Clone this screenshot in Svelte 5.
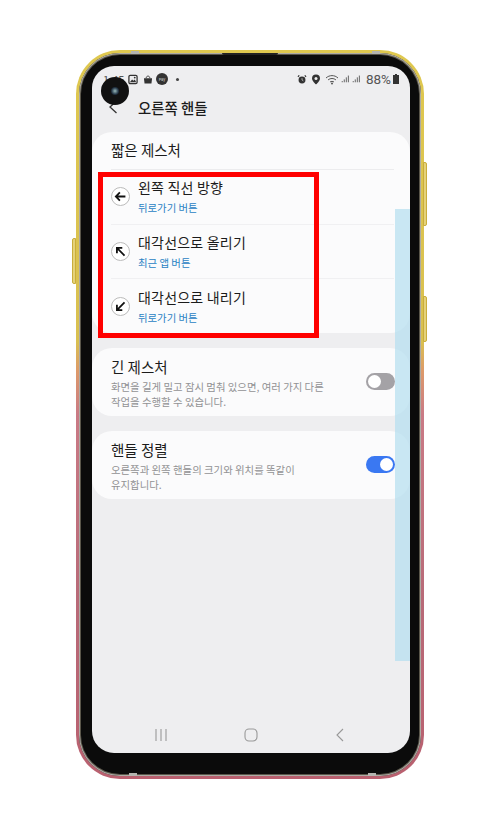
<script>
  const rows = [
    { title: '왼쪽 직선 방향', sub: '뒤로가기 버튼', d: 'M15 9.5H4.5M8.8 5L4.3 9.5L8.8 14' },
    { title: '대각선으로 올리기', sub: '최근 앱 버튼', d: 'M14 14L5.5 5.5M5.5 11.5V5.5H11.5' },
    { title: '대각선으로 내리기', sub: '뒤로가기 버튼', d: 'M14 5L5.5 13.5M5.5 7.5V13.5H11.5' }
  ];
</script>

<div class="page">
  <div class="phone">
    <div class="bezel">
      <div class="screen">
        <div class="status">
          <div class="status-left">
            <span class="time">1:45</span>
            <svg width="10" height="11" viewBox="0 0 11 11"><rect x="1" y="1" width="9" height="9" rx="1.5" fill="none" stroke="#333" stroke-width="1.4"/><path d="M2 8.5L4.5 5.5L6 7L7.5 5.5L9 8.5Z" fill="#333"/><circle cx="7.4" cy="3.4" r="1" fill="#333"/></svg>
            <svg width="10" height="11" viewBox="0 0 11 11" class="bag"><path d="M1 4H10L9.3 10H1.7Z" fill="#333"/><path d="M3.5 4C3.5 1 7.5 1 7.5 4" fill="none" stroke="#333" stroke-width="1"/></svg>
            <span class="pay">Pay</span>
            <span class="dot"></span>
          </div>
          <div class="status-right">
            <svg width="10" height="11" viewBox="0 0 11 11"><circle cx="5.5" cy="6" r="3.8" fill="#333"/><path d="M1 2.5L2.5 1M10 2.5L8.5 1" stroke="#333" stroke-width="1.3"/><path d="M5.5 4V6L7 7" stroke="#eee" stroke-width=".7" fill="none"/></svg>
            <svg width="10" height="11" viewBox="0 0 10 11" class="pin"><path d="M5 .5A4 4 0 0 1 9 4.5C9 7 5 10.500 5 10.500S1 7 1 4.5A4 4 0 0 1 5 .5Z" fill="#333"/><circle cx="5" cy="4.5" r="1.500" fill="#eee"/></svg>
            <svg width="14" height="11" viewBox="0 0 14 11" class="wifi"><path d="M1 4C4.500 .8 9.500 .8 13 4M3 6C5.300 4 8.700 4 11 6M5 8C6 7.200 8 7.200 9 8" fill="none" stroke="#555" stroke-width="1"/><circle cx="7" cy="9.500" r="1" fill="#555"/></svg>
            <svg width="9" height="10" viewBox="0 0 11 10"><path d="M1.500 9V7.500M4 9V5.500M6.500 9V3M9 9V.8" stroke="#555" stroke-width="1.100"/></svg>
            <svg width="9" height="10" viewBox="0 0 11 10"><path d="M1.500 9V7.500M4 9V5.500M6.500 9V3M9 9V.8" stroke="#555" stroke-width="1.100"/></svg>
            <span class="battery-text">88%</span>
            <svg width="6" height="10" viewBox="0 0 6 10"><path d="M2 0H4V1H6V10H0V1H2Z" fill="#333"/></svg>
          </div>
        </div>

        <div class="header">
          <svg width="12" height="16" viewBox="0 0 12 16"><path d="M9.500 2L3 8L9.500 14" fill="none" stroke="#333" stroke-width="1.300"/></svg>
          <h1>오른쪽 핸들</h1>
        </div>

        <section class="card first">
          <h2>짧은 제스처</h2>
          {#each rows as row}
            <div class="row">
              <span class="icon">
                <svg width="19" height="19" viewBox="0 0 19 19"><path d={row.d} fill="none" stroke="#111" stroke-width="2"/></svg>
              </span>
              <div class="row-text">
                <div class="row-title">{row.title}</div>
                <div class="row-sub">{row.sub}</div>
              </div>
            </div>
          {/each}
        </section>

        <section class="card setting">
          <div class="setting-text">
            <h3>긴 제스처</h3>
            <p>화면을 길게 밀고 잠시 멈춰 있으면, 여러 가지 다른<br />작업을 수행할 수 있습니다.</p>
          </div>
          <span class="toggle"><span class="knob"></span></span>
        </section>

        <section class="card setting">
          <div class="setting-text">
            <h3>핸들 정렬</h3>
            <p>오른쪽과 왼쪽 핸들의 크기와 위치를 똑같이<br />유지합니다.</p>
          </div>
          <span class="toggle on"><span class="knob"></span></span>
        </section>

        <div class="spacer"></div>

        <nav class="navbar">
          <svg width="14" height="14" viewBox="0 0 14 14"><path d="M2 1V13M7 1V13M12 1V13" stroke="#999" stroke-width="1.100"/></svg>
          <svg width="14" height="14" viewBox="0 0 14 14"><rect x="1" y="1" width="12" height="12" rx="4" fill="none" stroke="#999" stroke-width="1.100"/></svg>
          <svg width="14" height="14" viewBox="0 0 14 14"><path d="M10 1L4 7L10 13" fill="none" stroke="#999" stroke-width="1.100"/></svg>
        </nav>
      </div>
    </div>

    <span class="btn btn-left"></span>
    <span class="btn btn-right-a"></span>
    <span class="btn btn-right-b"></span>
    <span class="band top-a"></span>
    <span class="band top-b"></span>
    <span class="band bottom-a"></span>
    <span class="band bottom-b"></span>
    <span class="earpiece"></span>
    <span class="camera"><span class="lens"></span></span>
    <span class="strip"></span>
    <span class="highlight"></span>
  </div>
</div>

<style>
  :global(body) {
    margin: 0;
    background: #fff;
  }
  .page {
    width: 500px;
    height: 827px;
    padding: 50px 76px 0;
    box-sizing: border-box;
    font-family: "Noto Sans CJK KR", "Noto Sans", sans-serif;
    overflow: hidden;
  }
  .phone {
    position: relative;
    width: 348px;
    height: 729px;
  }
  .bezel {
    box-sizing: border-box;
    height: 100%;
    padding: 16px 11px 23px 16px;
    border-radius: 44px;
    border: 3px solid transparent;
    background:
      linear-gradient(#0b0b0b, #0b0b0b) padding-box,
      linear-gradient(#dfc84f 0%, #d9c050 40%, #dd9a6a 44%, #c97a85 50%, #b86a78 75%, #b9606f 100%) border-box;
    box-shadow:
      inset 0 0 0 1px rgba(255, 255, 255, 0.5),
      inset 0 0 0 2px rgba(110, 105, 90, 0.8);
    display: flex;
  }
  .screen {
    flex: 1;
    margin: -3px 0 0 -3px;
    background: #eeeef0;
    border-radius: 22px;
    overflow: hidden;
    display: flex;
    flex-direction: column;
    color: #1b1b1b;
  }
  .status {
    height: 26px;
    flex: none;
    padding: 0 11px;
    display: flex;
    align-items: center;
    justify-content: space-between;
    font-size: 12px;
    color: #555;
  }
  .status-left,
  .status-right {
    display: flex;
    align-items: center;
    gap: 3px;
  }
  .status-right {
    gap: 2px;
  }
  .bag,
  .pin,
  .wifi {
    margin-left: 2px;
  }
  .time {
    font-size: 11px;
    width: 22px;
  }
  .pay {
    width: 12px;
    height: 12px;
    border-radius: 50%;
    background: #333;
    color: #ddd;
    font-size: 4px;
    line-height: 12px;
    text-align: center;
  }
  .dot {
    width: 3px;
    height: 3px;
    margin-left: 5px;
    background: #444;
    border-radius: 50%;
  }
  .battery-text {
    font-family: "Roboto", sans-serif;
    font-size: 13.500px;
    margin-left: 3px;
  }
  .header {
    height: 30px;
    padding: 0 0 10px 15px;
    flex: none;
    display: flex;
    align-items: center;
    gap: 19px;
  }
  .header h1 {
    margin: 0;
    font-size: 14.400px;
    font-weight: 500;
  }
  .card {
    background: #fbfbfc;
    border-radius: 20px;
    flex: none;
  }
  .first {
    height: 201px;
    padding: 0 16px 0 19px;
    box-sizing: border-box;
  }
  h2 {
    margin: 0;
    height: 37px;
    line-height: 36px;
    font-size: 14.500px;
    font-weight: 400;
    border-bottom: 1px solid #ececee;
  }
  .row {
    height: 54.500px;
    box-sizing: border-box;
    display: flex;
    align-items: center;
    gap: 8px;
    border-bottom: 1px solid #f0f0f2;
  }
  .row:last-child {
    border-bottom: none;
  }
  .icon {
    width: 19px;
    height: 19px;
    flex: none;
    border-radius: 50%;
    border: 1px solid #bbb;
    box-sizing: border-box;
    display: flex;
    align-items: center;
    justify-content: center;
    background: #fff;
  }
  .row-title {
    font-size: 14px;
    line-height: 18px;
    letter-spacing: 0.200px;
  }
  .row-sub {
    font-size: 10.400px;
    line-height: 14px;
    margin-top: 5px;
    color: #2a83c4;
  }
  .setting {
    height: 68px;
    margin-top: 15px;
    padding: 0 15px 0 19px;
    display: flex;
    align-items: center;
    justify-content: space-between;
  }
  .setting-text {
    padding-top: 2px;
  }
  .setting h3 {
    margin: 0 0 3px;
    font-size: 14.500px;
    line-height: 18px;
    font-weight: 400;
  }
  .setting p {
    margin: 0;
    font-size: 10.400px;
    line-height: 15px;
    color: #929294;
  }
  .toggle {
    width: 29px;
    height: 17px;
    margin-bottom: 2px;
    border-radius: 9px;
    background: #a4a2a6;
    flex: none;
    display: flex;
    align-items: center;
    padding: 0 2px;
    box-sizing: border-box;
  }
  .toggle.on {
    background: #3a78f2;
    justify-content: flex-end;
  }
  .knob {
    width: 13px;
    height: 13px;
    border-radius: 50%;
    background: #fff;
  }
  .spacer {
    flex: 1;
  }
  .navbar {
    height: 36px;
    flex: none;
    padding: 0 63px 0 62px;
    display: flex;
    align-items: center;
    justify-content: space-between;
  }
  .btn {
    position: absolute;
    width: 4px;
    background: #e5d27a;
    border: 1px solid #c9ad3c;
    box-sizing: border-box;
  }
  .btn-left {
    left: -4px;
    top: 188px;
    height: 46px;
    border-radius: 2px 0 0 2px;
  }
  .btn-right-a {
    right: -3px;
    top: 112px;
    height: 64px;
    border-radius: 0 2px 2px 0;
  }
  .btn-right-b {
    right: -3px;
    top: 246px;
    height: 46px;
    border-radius: 0 2px 2px 0;
  }
  .band {
    position: absolute;
    width: 8px;
    height: 3px;
    background: #b5b5b0;
  }
  .top-a {
    left: 55px;
    top: 1px;
  }
  .top-b {
    left: 296px;
    top: 1px;
  }
  .bottom-a {
    left: 53px;
    bottom: 3px;
  }
  .bottom-b {
    left: 292px;
    bottom: 3px;
  }
  .earpiece {
    position: absolute;
    left: 146px;
    top: 3px;
    width: 56px;
    height: 2px;
    background: #222;
    border-radius: 0 0 3px 3px;
  }
  .camera {
    position: absolute;
    left: 25px;
    top: 27px;
    width: 28px;
    height: 28px;
    border-radius: 50%;
    background: #111;
    display: flex;
    align-items: center;
    justify-content: center;
  }
  .lens {
    width: 8px;
    height: 8px;
    border-radius: 50%;
    background: radial-gradient(#9bb, #234 60%, #111);
  }
  .strip {
    position: absolute;
    left: 319px;
    top: 159px;
    width: 15px;
    height: 452px;
    background: rgba(180, 222, 240, 0.7);
  }
  .highlight {
    position: absolute;
    left: 22px;
    top: 122px;
    width: 221px;
    height: 166px;
    box-sizing: border-box;
    border: 5px solid #ff0000;
  }
</style>
